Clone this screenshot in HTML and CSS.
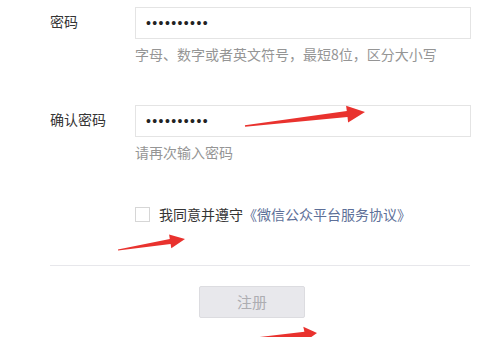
FILE: index.html
```html
<!DOCTYPE html>
<html lang="zh-CN">
<head>
<meta charset="utf-8">
<title>注册</title>
<link rel="stylesheet" href="styles.css">
</head>
<body>
<form class="form">
  <div class="row">
    <label class="label">密码</label>
    <div class="field">
      <input class="input" type="password" value="abcdefghij">
      <p class="hint">字母、数字或者英文符号，最短8位，区分大小写</p>
    </div>
  </div>
  <div class="row row-confirm">
    <label class="label">确认密码</label>
    <div class="field">
      <input class="input" type="password" value="abcdefghij">
      <p class="hint">请再次输入密码</p>
    </div>
  </div>
  <div class="agree">
    <input class="check" type="checkbox">
    <span class="agree-text">我同意并遵守</span><a class="link">《微信公众平台服务协议》</a>
  </div>
  <hr class="divider">
  <div class="actions">
    <button class="btn" type="button">注册</button>
  </div>
</form>
<svg class="annot" width="481" height="337" viewBox="0 0 481 337">
  <polygon class="arrow" points="244.9,125.3 346.8,111.1 346.1,105.7 365,112 348.1,122.5 347.5,117.1 245.1,126.7"/>
  <polygon class="arrow" points="117.9,249.4 169.8,238.9 169.1,234.5 185,239 171.3,248.3 170.6,243.9 118.1,250.6"/>
  <polygon class="arrow" points="208,343 304.4,331.8 303.3,326.8 317,333 304.9,341.5 304.8,337 208.4,347"/>
</svg>
</body>
</html>
```
FILE: styles.css
```css
html, body {
  margin: 0;
  padding: 0;
  background: #ffffff;
}
body {
  position: relative;
  width: 481px;
  height: 337px;
  overflow: hidden;
  font-family: "Noto Sans CJK SC", "Microsoft YaHei", sans-serif;
  font-size: 14px;
  color: #353535;
}
.form {
  margin: 0 0 0 50px;
  padding-top: 7px;
  width: 421px;
}
.row {
  display: flex;
  align-items: flex-start;
}
.row-confirm {
  margin-top: 42px;
}
.label {
  width: 85px;
  line-height: 28px;
  color: #353535;
}
.field {
  flex: 1;
  display: flex;
  flex-direction: column;
}
.input {
  box-sizing: border-box;
  height: 32px;
  width: 336px;
  margin: 0;
  padding: 0 10px;
  border: 1px solid #e4e4e4;
  outline: none;
  background: #fff;
  font-family: "Liberation Sans", Arial, sans-serif;
  font-size: 14px;
  letter-spacing: 1.4px;
  color: #222;
}
.hint {
  margin: 6px 0 0;
  line-height: 18px;
  color: #959595;
}
.agree {
  display: flex;
  align-items: center;
  margin: 43px 0 0 85px;
  height: 20px;
  line-height: 20px;
}
.check {
  appearance: none;
  -webkit-appearance: none;
  box-sizing: border-box;
  width: 15px;
  height: 15px;
  margin: 0 9px 0 0;
  border: 1px solid #d6d6d6;
  background: #fff;
}
.agree-text {
  color: #353535;
}
.link {
  color: #5d6f98;
  text-decoration: none;
}
.divider {
  margin: 41px 1px 0 0;
  border: 0;
  border-top: 1px solid #e7e7eb;
  height: 0;
}
.actions {
  display: flex;
  margin-top: 20px;
  padding-left: 149px;
}
.btn {
  box-sizing: border-box;
  width: 106px;
  height: 32px;
  margin: 0;
  padding: 0;
  border: 1px solid #dcdce0;
  border-radius: 2px;
  background: #e8e8ec;
  color: #adadb2;
  font-family: "Noto Sans CJK SC", "Microsoft YaHei", sans-serif;
  font-size: 15px;
  line-height: 30px;
}
.annot {
  position: absolute;
  left: 0;
  top: 0;
  pointer-events: none;
}
.arrow {
  fill: #e9322e;
}
```
